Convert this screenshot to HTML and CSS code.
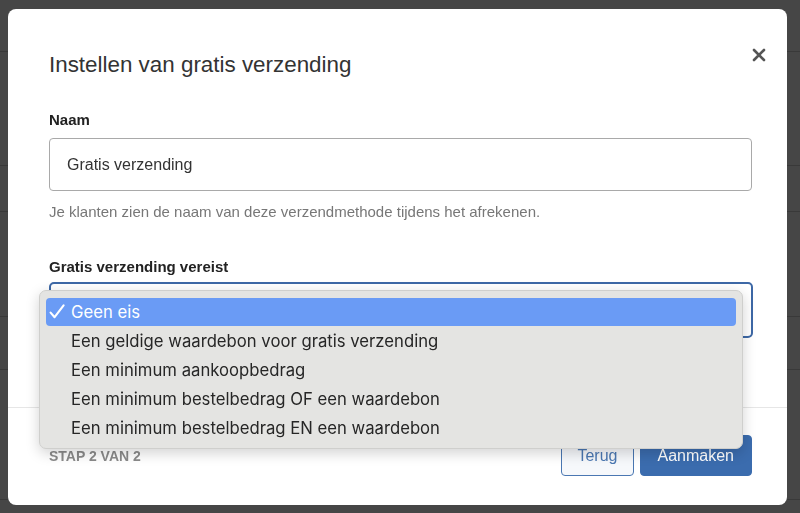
FILE: index.html
```html
<!DOCTYPE html>
<html>
<head>
<meta charset="utf-8">
<link rel="stylesheet" href="styles.css">
</head>
<body>
<div class="backdrop">
  <div class="bg-row"></div>
  <div class="bg-row"></div>
  <div class="bg-row"></div>
  <div class="bg-row"></div>
  <div class="bg-row"></div>
  <div class="bg-row"></div>
</div>

<div class="overlay">
  <div class="modal">
    <div class="modal-head">
      <h2 class="modal-title">Instellen van gratis verzending</h2>
      <button class="close" aria-label="Sluiten">
        <svg width="14" height="14" viewBox="0 0 14 14"><path d="M2 2 L12 12 M12 2 L2 12" stroke="#555" stroke-width="2.6" stroke-linecap="round"/></svg>
      </button>
    </div>

    <div class="modal-body">
      <div class="field">
        <label class="field-label">Naam</label>
        <div class="input">Gratis verzending</div>
        <p class="help">Je klanten zien de naam van deze verzendmethode tijdens het afrekenen.</p>
      </div>

      <div class="field field-select">
        <label class="field-label">Gratis verzending vereist</label>
        <div class="select-wrap">
          <div class="select"></div>
          <ul class="menu">
            <li class="menu-item is-selected">
              <svg class="check" width="16" height="15" viewBox="0 0 16 15"><path d="M1.6 8.6 L5.6 13.2 L14.6 1.4" fill="none" stroke="#fff" stroke-width="2.1" stroke-linecap="round" stroke-linejoin="round"/></svg>
              Geen eis
            </li>
            <li class="menu-item">Een geldige waardebon voor gratis verzending</li>
            <li class="menu-item">Een minimum aankoopbedrag</li>
            <li class="menu-item">Een minimum bestelbedrag OF een waardebon</li>
            <li class="menu-item">Een minimum bestelbedrag EN een waardebon</li>
          </ul>
        </div>
      </div>
    </div>

    <div class="modal-foot">
      <span class="step">STAP 2 VAN 2</span>
      <div class="actions">
        <button class="btn btn-outline">Terug</button>
        <button class="btn btn-primary">Aanmaken</button>
      </div>
    </div>
  </div>
</div>
</body>
</html>
```

FILE: styles.css
```css
/* dimmed page behind the dialog */
body {
    margin: 0;
    height: 513px;
    overflow: hidden;
    background: #464646;
    font-family: 'Liberation Sans', Arial, sans-serif;
    color: #333;
}
.backdrop .bg-row {
    border-bottom: 1px solid #393939;
}
.backdrop .bg-row:nth-child(1) { height: 51px; }
.backdrop .bg-row:nth-child(2) { height: 113px; }
.backdrop .bg-row:nth-child(3) { height: 45px; }
.backdrop .bg-row:nth-child(4) { height: 104px; }
.backdrop .bg-row:nth-child(5) { height: 52px; }
.backdrop .bg-row:nth-child(6) { height: 129px; }

.overlay {
    position: fixed;
    inset: 0;
    padding: 9px 13px 0 8px;
}

.modal {
    background: #fff;
    border-radius: 8px;
    height: 496px;
    box-sizing: border-box;
    display: flex;
    flex-direction: column;
}

.modal-head {
    display: flex;
    justify-content: space-between;
    align-items: flex-start;
    padding: 41px 21px 0 41px;
}
.modal-title {
    margin: 0;
    font-size: 22.4px;
    line-height: 30px;
    font-weight: normal;
    color: #333;
}
.close {
    margin-top: -2px;
    padding: 0;
    border: 0;
    background: none;
    width: 14px;
    height: 14px;
    display: flex;
}

.modal-body {
    padding: 0 35px 69px 41px;
}
.field {
    display: flex;
    flex-direction: column;
    margin-top: 30px;
}
.field-select {
    margin-top: 35px;
}
.field-label {
    font-size: 15px;
    line-height: 20px;
    font-weight: bold;
    color: #222;
}
.input {
    margin-top: 8px;
    height: 53px;
    box-sizing: border-box;
    border: 1px solid #a9a9a9;
    border-radius: 4px;
    padding: 0 17px;
    display: flex;
    align-items: center;
    font-size: 16px;
    color: #333;
}
.help {
    margin: 11px 0 0;
    font-size: 15px;
    line-height: 20px;
    color: #777;
}

.select-wrap {
    position: relative;
    margin-top: 5px;
}
.select {
    height: 56px;
    margin-right: -1px;
    box-sizing: border-box;
    border: 2px solid #3d68a6;
    border-radius: 5px;
}

/* native-looking open dropdown */
.menu {
    position: absolute;
    left: -10px;
    top: 8px;
    width: 704px;
    box-sizing: border-box;
    margin: 0;
    padding: 7px 6px 5px;
    list-style: none;
    background: #e4e4e2;
    border: 1px solid #cfcfcd;
    border-radius: 7px;
    box-shadow: 0 4px 14px rgba(0, 0, 0, 0.18);
    font-family: Inter, 'Noto Sans', sans-serif;
    font-size: 16.7px;
    color: #262626;
}
.menu-item {
    height: 28px;
    margin-bottom: 1px;
    display: flex;
    align-items: center;
    padding-left: 25px;
    border-radius: 4px;
}
.menu-item.is-selected {
    position: relative;
    background: #6a9bf5;
    color: #fff;
}
.check {
    position: absolute;
    left: 3px;
    top: 6px;
}

.modal-foot {
    border-top: 1px solid #e6e6e6;
    padding: 27px 35px 0 41px;
    display: flex;
    justify-content: space-between;
    align-items: center;
}
.step {
    font-size: 14px;
    font-weight: bold;
    color: #8a8a8a;
}
.actions {
    display: flex;
    gap: 6px;
}
.btn {
    height: 41px;
    border-radius: 4px;
    font-family: 'Liberation Sans', Arial, sans-serif;
    font-size: 16px;
    padding: 0 15px;
}
.btn-outline {
    background: #f6f8fb;
    border: 1px solid #4a77b2;
    color: #4a77b2;
}
.btn-primary {
    background: #3b6cae;
    border: 1px solid #3b6cae;
    color: #fff;
    padding: 0 17px;
}
```
